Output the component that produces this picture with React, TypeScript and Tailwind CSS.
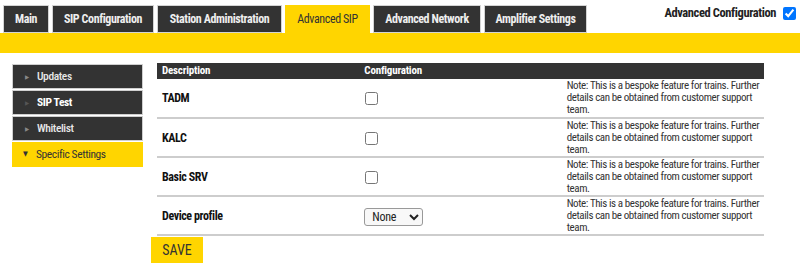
import { useState } from 'react'

const tabs = [
  { label: 'Main', w: 'w-[46px]' },
  { label: 'SIP Configuration', w: 'w-[102px]' },
  { label: 'Station Administration', w: 'w-[125px]' },
  { label: 'Advanced SIP', w: 'w-[85px]', active: true },
  { label: 'Advanced Network', w: 'w-[108px]' },
  { label: 'Amplifier Settings', w: 'w-[103px]' },
]

const sideItems = [
  { label: 'Updates' },
  { label: 'SIP Test', bold: true },
  { label: 'Whitelist' },
  { label: 'Specific Settings', active: true },
]

const rows = ['TADM', 'KALC', 'Basic SRV', 'Device profile']

const NOTE = 'Note: This is a bespoke feature for trains. Further details can be obtained from customer support team.'

export default function App() {
  const [advanced, setAdvanced] = useState(true)

  return (
    <div className="w-[800px] h-[265px] bg-white text-[#222] font-['Roboto_Condensed','Liberation_Sans_Narrow','DejaVu_Sans_Condensed',Roboto,sans-serif] overflow-hidden">
      {/* top tabs */}
      <div className="flex items-end justify-between pt-[5px] pl-[3px] pr-[4px]">
        <div className="flex gap-[3px]">
          {tabs.map((t) =>
            t.active ? (
              <div
                key={t.label}
                className={`${t.w} h-[28px] flex items-center justify-center bg-[#ffd500] text-[#333] text-[12px] tracking-[-0.4px]`}
              >
                {t.label}
              </div>
            ) : (
              <div
                key={t.label}
                className={`${t.w} h-[28px] flex items-center justify-center bg-[#333] border border-[#d4d4d4] text-[#eee] text-[12px] font-bold tracking-[-0.4px]`}
              >
                {t.label}
              </div>
            )
          )}
        </div>
        <label className="self-start -mt-[1px] flex items-center gap-[7px] text-[12.5px] tracking-[-0.4px] font-bold text-[#222]">
          Advanced Configuration
          <input
            type="checkbox"
            checked={advanced}
            onChange={(e) => setAdvanced(e.target.checked)}
            className="w-[13px] h-[13px] m-0"
          />
        </label>
      </div>
      <div className="h-[20px] bg-[#ffd500]" />

      <div className="flex">
        {/* sidebar */}
        <div className="ml-[12px] mt-[11px] w-[131px] flex flex-col gap-[1px]">
          {sideItems.map((s) =>
            s.active ? (
              <div
                key={s.label}
                className="h-[25px] flex items-center bg-[#ffd500] text-[#333] text-[11.5px] tracking-[-0.4px] pl-[11px]"
              >
                <span className="text-[7px] w-[13px] tracking-normal">▼</span>
                {s.label}
              </div>
            ) : (
              <div
                key={s.label}
                className={`h-[25px] flex items-center bg-[#333] border border-[#cfcfcf] text-[11.5px] tracking-[-0.4px] pl-[12px] ${s.bold ? 'text-white font-bold' : 'text-[#e8e8e8] font-medium'}`}
              >
                <span className={`text-[6px] w-[12px] tracking-normal ${s.bold ? 'text-[#555]' : 'text-[#888]'}`}>▶</span>
                {s.label}
              </div>
            )
          )}
        </div>

        {/* content */}
        <div className="ml-[8px] pt-[10px]">
          <table className="ml-[6px] w-[607px] table-fixed border-collapse">
            <thead>
              <tr className="bg-[#333] text-white text-[11px] tracking-[-0.2px] font-bold h-[16px]">
                <th className="text-left pl-[5px] py-0 leading-[16px]">Description</th>
                <th className="text-left pl-[5px] py-0 leading-[16px]">Configuration</th>
                <th />
              </tr>
            </thead>
            <tbody>
              {rows.map((r) => (
                <tr key={r} className="h-[39px] border-b-2 border-[#cdcdcd]">
                  <td className="pl-[5px] text-[12px] tracking-[-0.4px] font-bold text-[#111] align-middle">{r}</td>
                  <td className="pl-[6px] align-middle">
                    {r === 'Device profile' ? (
                      <select className="ml-[-1px] w-[59px] h-[18px] text-[12px] tracking-[-0.3px] border border-[#999] rounded-[3px] bg-[#f8f8f8] px-[3px]">
                        <option>None</option>
                      </select>
                    ) : (
                      <input type="checkbox" className="w-[13px] h-[13px] m-0 align-middle" />
                    )}
                  </td>
                  <td className="align-top pl-[5px] pr-0 pt-[1px] text-[11px] tracking-[-0.4px] leading-[12px] text-[#333]">{NOTE}</td>
                </tr>
              ))}
            </tbody>
          </table>
          <button className="mt-[1px] w-[52px] h-[26px] bg-[#ffd500] text-[#333] text-[14px] flex items-center justify-center">
            SAVE
          </button>
        </div>
      </div>
    </div>
  )
}
